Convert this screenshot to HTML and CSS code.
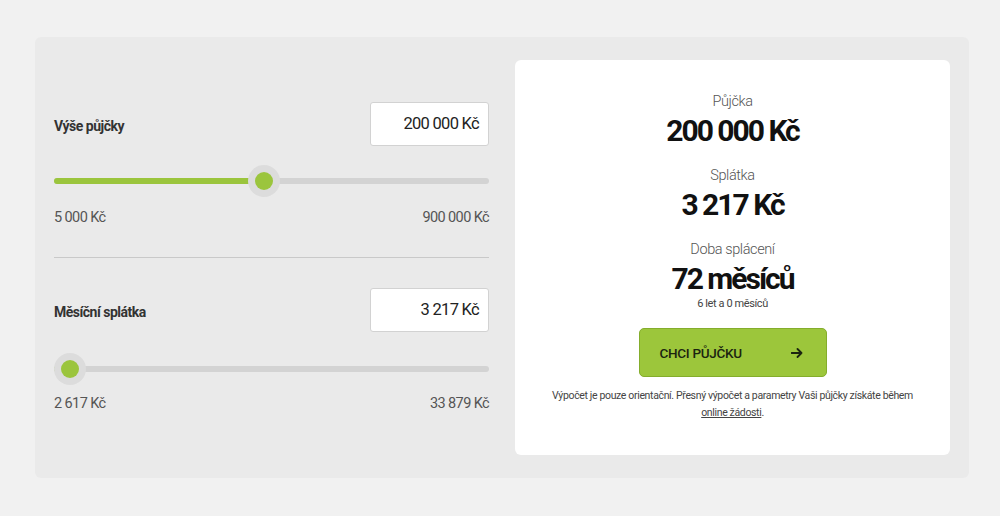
FILE: index.html
```html
<!DOCTYPE html>
<html lang="cs">
<head>
<meta charset="utf-8">
<title>Kalkulačka půjčky</title>
<link rel="stylesheet" href="styles.css">
</head>
<body>
<div class="calc">
  <div class="inputs">
    <div class="field">
      <div class="row">
        <span class="label">Výše půjčky</span>
        <div class="box">200 000 Kč</div>
      </div>
      <div class="slider">
        <div class="track"><div class="fill" style="width:48.2%"></div></div>
        <div class="thumb" style="left:48.2%"></div>
      </div>
      <div class="range"><span>5 000 Kč</span><span>900 000 Kč</span></div>
    </div>
    <div class="divider"></div>
    <div class="field second">
      <div class="row">
        <span class="label">Měsíční splátka</span>
        <div class="box">3 217 Kč</div>
      </div>
      <div class="slider">
        <div class="track"><div class="fill" style="width:3.7%"></div></div>
        <div class="thumb" style="left:3.7%"></div>
      </div>
      <div class="range"><span>2 617 Kč</span><span>33 879 Kč</span></div>
    </div>
  </div>
  <div class="result">
    <div class="r-label first">Půjčka</div>
    <div class="r-value">200 000 Kč</div>
    <div class="r-label">Splátka</div>
    <div class="r-value">3 217 Kč</div>
    <div class="r-label">Doba splácení</div>
    <div class="r-value">72 měsíců</div>
    <div class="r-sub">6 let a 0 měsíců</div>
    <a class="btn" href="#"><span>CHCI PŮJČKU</span><svg class="arrow" width="12" height="10" viewBox="0 0 12 10"><path d="M0.5 5H10.5M6.5 1L10.5 5L6.5 9" fill="none" stroke="#1b2410" stroke-width="1.8" stroke-linecap="round" stroke-linejoin="round"/></svg></a>
    <p class="note">Výpočet je pouze orientační. Přesný výpočet a parametry Vaši půjčky získáte během<br><a href="#">online žádosti</a>.</p>
  </div>
</div>
</body>
</html>
```
FILE: styles.css
```css
* { box-sizing: border-box; }
body {
  margin: 0;
  background: #f1f1f1;
  font-family: Roboto, "Liberation Sans", sans-serif;
  color: #222;
}
.calc {
  margin: 37px 0 0 35px;
  width: 934px;
  height: 441px;
  background: #eaeaea;
  border-radius: 6px;
  padding: 23px 19px;
  display: flex;
  gap: 26px;
}
.inputs {
  width: 435px;
  padding-top: 42px;
}
.row {
  display: flex;
  justify-content: space-between;
  align-items: center;
  height: 44px;
}
.label {
  font-size: 14px;
  font-weight: 700;
  color: #333;
  letter-spacing: -0.5px;
  padding-top: 3px;
}
.box {
  width: 119px;
  height: 44px;
  background: #fff;
  border: 1px solid #d2d2d2;
  border-radius: 3px;
  text-align: right;
  padding-right: 9px;
  line-height: 42px;
  font-size: 16.5px;
  letter-spacing: -0.7px;
  color: #222;
}
.slider {
  position: relative;
  height: 32px;
  margin-top: 19px;
  display: flex;
  align-items: center;
}
.second .slider { margin-top: 21px; }
.track {
  width: 100%;
  height: 6px;
  border-radius: 3px;
  background: #d3d3d3;
}
.fill {
  height: 100%;
  border-radius: 3px;
  background: #9bc53d;
}
.thumb {
  position: absolute;
  top: 0;
  width: 32px;
  height: 32px;
  margin-left: -16px;
  border-radius: 50%;
  background: #dcdcdc;
}
.thumb::after {
  content: "";
  position: absolute;
  left: 7px;
  top: 7px;
  width: 18px;
  height: 18px;
  border-radius: 50%;
  background: #9bc53d;
}
.range {
  display: flex;
  justify-content: space-between;
  margin-top: 12px;
  line-height: 18px;
  font-size: 14.5px;
  color: #555;
  letter-spacing: -0.6px;
}
.second .range { margin-top: 10px; }
.divider {
  height: 1px;
  background: #c9c9c9;
  margin: 30px 0 30px;
}
.result {
  width: 435px;
  height: 395px;
  background: #fff;
  border-radius: 6px;
  padding-top: 33px;
  display: flex;
  flex-direction: column;
  align-items: center;
  text-align: center;
}
.r-label {
  font-size: 14.5px;
  font-weight: 300;
  color: #555;
  line-height: 18px;
  margin-top: 18px;
  letter-spacing: -0.4px;
}
.r-label.first { margin-top: 0; }
.r-value {
  font-size: 30px;
  font-weight: 700;
  color: #111;
  line-height: 36px;
  margin-top: 2px;
  letter-spacing: -2px;
}
.r-sub {
  font-size: 11px;
  color: #444;
  line-height: 14px;
  letter-spacing: -0.4px;
}
.btn {
  margin-top: 17px;
  width: 188px;
  height: 49px;
  display: flex;
  justify-content: space-between;
  align-items: center;
  padding: 0 23px 0 20px;
  background: #9cc63b;
  border: 1px solid #84ad2c;
  border-radius: 5px;
  color: #1b2410;
  text-decoration: none;
  font-size: 13.5px;
  font-weight: 500;
  letter-spacing: -0.3px;
}
.arrow { display: block; }
.note {
  margin: 10px 0 0;
  font-size: 10.5px;
  line-height: 17px;
  color: #444;
  letter-spacing: -0.35px;
}
.note a {
  color: #444;
  text-decoration: underline;
}
```
